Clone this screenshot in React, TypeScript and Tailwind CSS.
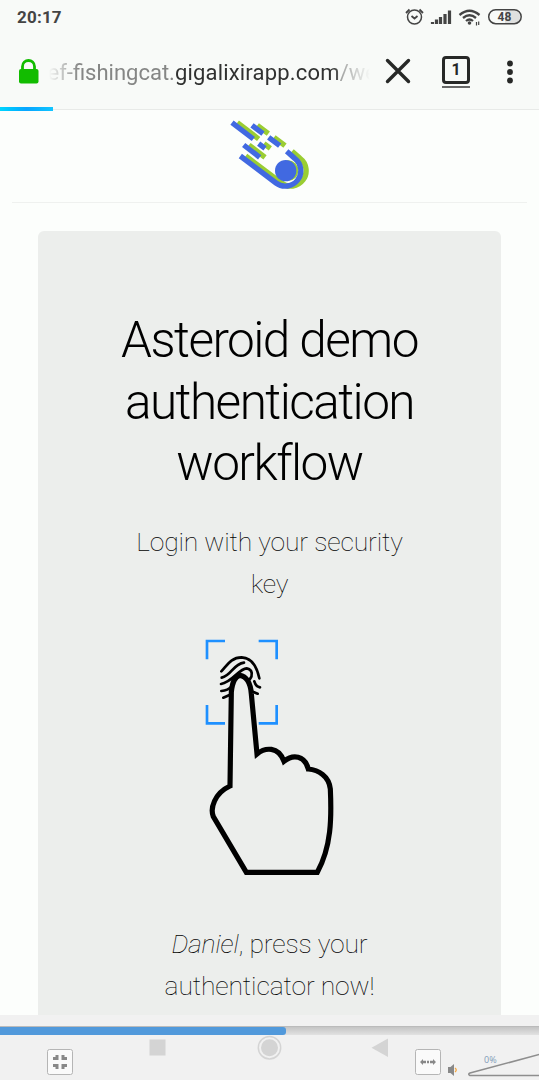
import React from "react";

function Logo() {
  const d =
    "M66 38L130 87M126 46L159 71M176 82L209 107M146 101L165 115M101 105L149 142M91 138L198 219A46 46 0 1 0 254 145L230 124";
  return (
    <svg className="h-[100px] w-[120px]" viewBox="0 0 360 300" fill="none" strokeWidth="16">
      <path d={d} stroke="#9acd32" transform="translate(16 0)" />
      <circle cx="234" cy="182" r="31" fill="#9acd32" />
      <path d={d} stroke="#4169e1" />
      <circle cx="227" cy="182" r="32" fill="#4169e1" />
    </svg>
  );
}

function Hand() {
  return (
    <svg className="h-[260px] w-[160px]" viewBox="0 0 480 780" fill="none">
      <path
        d="M51 88V33H105M206 33H260V88M51 225V280H105M206 280H260V225"
        stroke="#1e90ff"
        strokeWidth="8"
      />
      <g stroke="#000" strokeWidth="8" strokeLinecap="round">
        <path d="M94 124C110 108 122 82 155 82C188 83 202 116 208 145" />
        <path d="M95 143C125 137 128 103 162 98" />
        <path d="M93 162C127 157 146 116 170 115C190 118 187 139 180 147" />
        <path d="M94 183C108 182 118 177 124 170M100 203L120 194M193 154C196 165 200 170 210 172M188 185L203 191" />
      </g>
      <path
        d="M120 468L124 186C127 155 137 137 150 136C168 138 182 158 184 192L201 372C225 352 265 348 282 394C309 372 344 376 355 417C385 420 417 438 421 477C425 565 424 650 382 727H169L70 560C60 535 73 490 120 468Z"
        fill="#eceeec"
        stroke="#000"
        strokeWidth="15.500"
      />
    </svg>
  );
}

function StatusIcons() {
  return (
    <svg className="h-8 w-[125px]" viewBox="400 2 125 32" fill="none" stroke="#444" strokeWidth="1.5">
      <circle cx="414.500" cy="17" r="7" />
      <path d="M411.500 16L414.500 18.500L417.500 16M406 13L409.500 9.500M423 13L419.500 9.500" strokeWidth="1.800" />
      <path
        d="M432.500 24V22M436.500 24V19.500M440.500 24V17M445 24V14M449.500 24V10.500"
        strokeWidth="3.200"
      />
      <path
        d="M459.500 15Q469.500 6.500 479.500 15M463 18Q469.500 12.500 476 18M466 21Q469.500 18 473 21"
        strokeWidth="2.300"
      />
      <circle cx="469.500" cy="23" r="1.800" fill="#444" stroke="none" />
      <path d="M476.500 22V25.500M478.700 21.500V25" strokeWidth="1.200" />
      <path d="M505 10.500H514A6 6 0 0 1 514 23H505Z" fill="#dfe0df" stroke="none" />
      <rect x="488.700" y="9.700" width="32.500" height="14" rx="7" />
      <text
        x="504.500"
        y="21"
        textAnchor="middle"
        className="fill-[#444] stroke-none font-[Roboto,sans-serif] text-[12px] font-bold"
      >
        48
      </text>
    </svg>
  );
}

function Browser() {
  return (
    <header className="relative h-[110px] shrink-0 border-b border-[#e8eae8] bg-[#f8faf8]">
      <div className="flex h-[34px] items-start justify-between pt-0.5 pr-3.5 pl-[17px]">
        <span className="pt-[3px] text-[17px] leading-6 font-bold tracking-[0.2px] text-[#444]">20:17</span>
        <StatusIcons />
      </div>
      <div className="flex h-[74px] items-center pl-[18px]">
        <svg className="h-[26px] w-[21px] shrink-0" viewBox="0 0 21 26" fill="none">
          <path d="M4.500 13V8.500C4.500 0.500 16.500 0.500 16.500 8.500V13" stroke="#12bc00" strokeWidth="2.800" />
          <rect x="1" y="11" width="19.500" height="14.500" rx="2" fill="#12bc00" />
        </svg>
        <div className="mt-1 ml-2.5 flex w-[321px] justify-start overflow-hidden text-[22px] leading-8 whitespace-nowrap text-[#858685] mask-[linear-gradient(90deg,transparent,black_30px,black_282px,transparent)]">
          <span className="-ml-[1.500px]">ef-fishingcat.</span>
          <span className="tracking-[0.180px] text-[#303130]">gigalixirapp.com</span>
          <span>/we</span>
        </div>
        <svg className="ml-3.5 h-7 w-7 shrink-0" viewBox="0 0 28 28">
          <path d="M3.500 3.500L24.500 24.500M24.500 3.500L3.500 24.500" stroke="#272827" strokeWidth="3.400" strokeLinecap="round" />
        </svg>
        <div className="mt-px ml-[30px] flex w-7 flex-col gap-0.5">
          <div className="flex h-7 items-center justify-center rounded-[4px] border-[3px] border-[#272827] text-base font-bold text-[#272827]">
            1
          </div>
          <div className="h-0.5 bg-[#666]" />
        </div>
        <svg className="mt-px ml-9 h-[26px] w-2 shrink-0" viewBox="0 0 8 26" fill="#272827">
          <circle cx="4" cy="4.500" r="2.900" />
          <circle cx="4" cy="13" r="2.900" />
          <circle cx="4" cy="21.500" r="2.900" />
        </svg>
      </div>
      <div className="absolute top-[107px] left-0 h-1 w-[53px] bg-linear-to-r from-[#00d5ff] via-[#0aa5ff] to-[#12c5ff]" />
    </header>
  );
}

function Player() {
  return (
    <footer className="h-[65px] shrink-0 bg-[#f1f1f1] pt-[11px]">
      <div className="h-[9px] border-t border-[#bbb] bg-linear-to-b from-[#c4c4c4] to-[#e2e2e2]">
        <div className="h-2 w-[286px] rounded-r-[3px] bg-[#5199db]" />
      </div>
      <svg className="block h-[45px] w-full" viewBox="0 1035 539 45" fill="none">
        <rect x="149.500" y="1039.500" width="16" height="16" fill="#d4d4d4" />
        <circle cx="269.500" cy="1047.700" r="11.200" stroke="#d4d4d4" strokeWidth="1.500" />
        <circle cx="269.500" cy="1047.700" r="8.500" fill="#d4d4d4" />
        <path d="M371.500 1047.700L388 1038.500V1057Z" fill="#d4d4d4" />
        <g fill="#fafafa" stroke="#b5b5b5">
          <rect x="47.500" y="1049.500" width="25" height="25" rx="2" />
          <rect x="415.500" y="1049.500" width="25" height="25" rx="2" />
        </g>
        <path
          d="M57 1055V1058.500H53M63 1055V1058.500H67M57 1069V1065.500H53M63 1069V1065.500H67"
          stroke="#888"
          strokeWidth="3"
        />
        <path d="M420 1062L423 1059V1065ZM436 1062L433 1059V1065Z" fill="#888" />
        <path d="M422 1062H426M430 1062H434M427 1062H429" stroke="#888" strokeWidth="2.400" />
        <path d="M448 1067H450.500L454 1064V1076L450.500 1073H448Z" fill="#888" />
        <path d="M455 1068Q457.500 1070 455 1072" stroke="#f5a53c" strokeWidth="1.300" />
        <path d="M541 1075.500H470Q467.500 1074 470 1073L541 1054" stroke="#8e8e8e" strokeWidth="1.600" />
        <text x="484" y="1063" className="fill-[#7f9bb8] font-['Open_Sans',sans-serif] text-[9px]">
          0%
        </text>
      </svg>
    </footer>
  );
}

export default function App() {
  return (
    <div className="flex h-[1080px] w-[539px] flex-col overflow-hidden bg-[#fcfefc] font-[Roboto,sans-serif]">
      <Browser />
      <main className="flex h-[905px] shrink-0 flex-col overflow-hidden">
        <div className="mx-3 flex h-[93px] shrink-0 justify-center border-b border-[#eff1ef]">
          <Logo />
        </div>
        <section className="mx-[38px] mt-7 flex h-[784px] shrink-0 flex-col items-center rounded-t-md bg-[#eceeec] text-center">
          <h1 className="mt-[79px] text-[49.500px] leading-[61.500px] font-light tracking-[-1.550px] whitespace-nowrap text-black">
            Asteroid demo
            <br />
            authentication
            <br />
            workflow
          </h1>
          <p className="mt-[26px] text-[26.500px] leading-[42px] font-thin tracking-[-0.160px] whitespace-nowrap text-black">
            Login with your security
            <br />
            key
          </p>
          <div className="mt-[25px]">
            <Hand />
          </div>
          <p className="mt-[33px] text-[26.500px] leading-[42px] font-thin tracking-[-0.160px] whitespace-nowrap text-black">
            <em>Daniel</em>, press your
            <br />
            authenticator now!
          </p>
        </section>
      </main>
      <Player />
    </div>
  );
}
